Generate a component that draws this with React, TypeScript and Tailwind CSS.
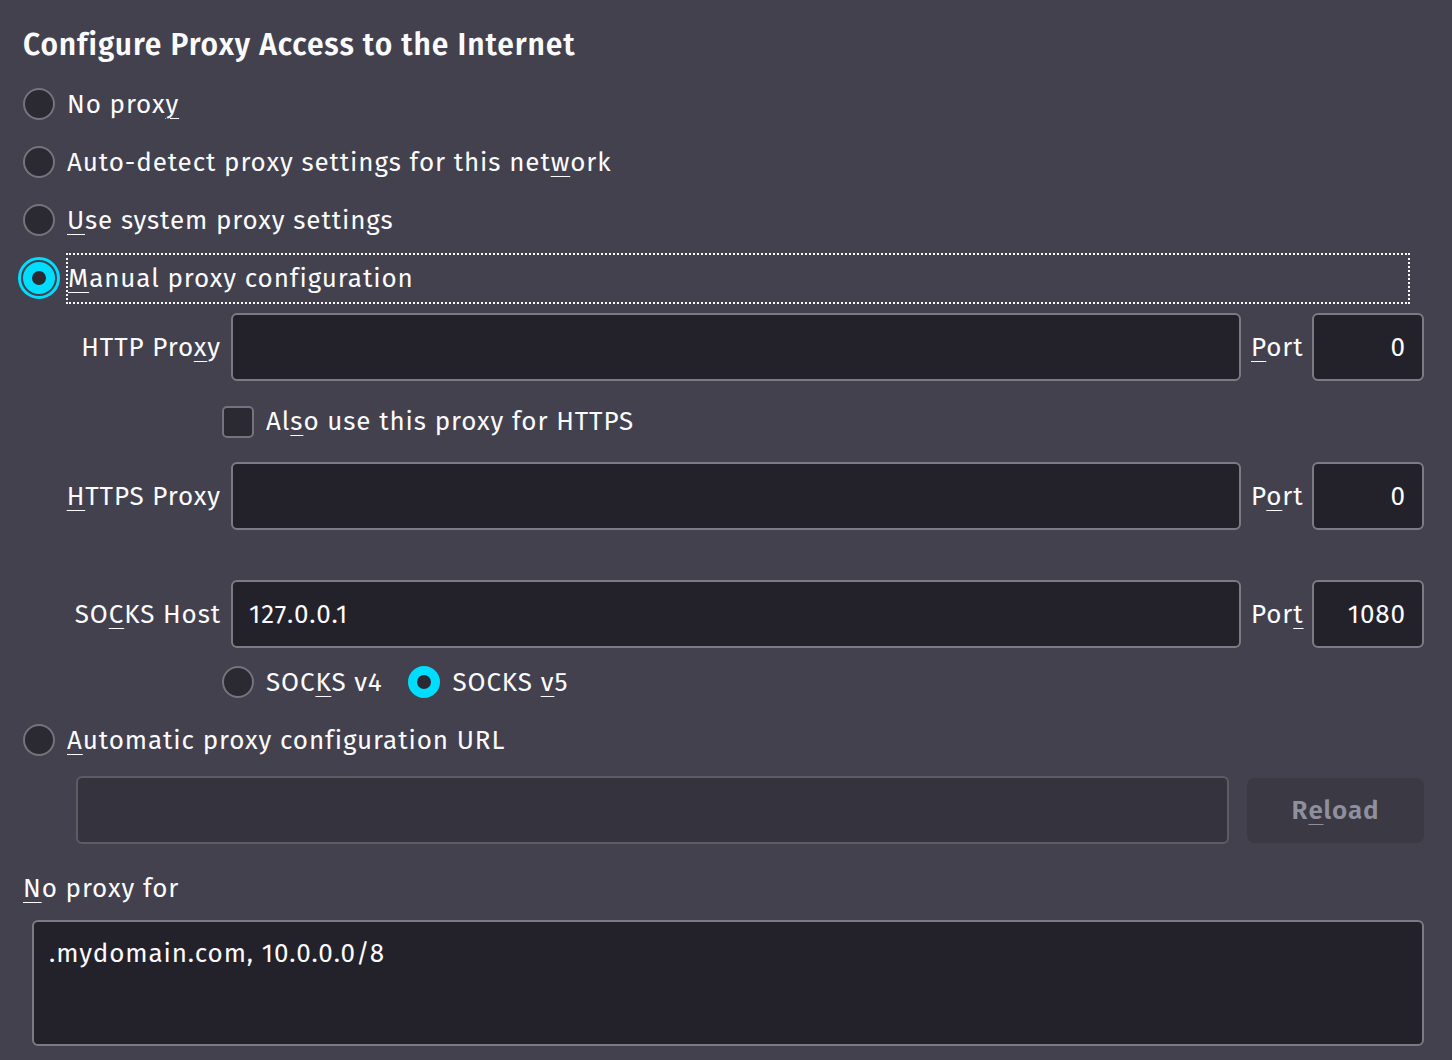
import React from "react";

const Key = ({ text, at }: { text: string; at: number }) => (
    <>
        {text.slice(0, at)}
        <span className="underline decoration-1 underline-offset-[5px]">{text[at]}</span>
        {text.slice(at + 1)}
    </>
);

const Radio = ({ checked, focused }: { checked?: boolean; focused?: boolean }) => {
    if (checked) {
        return (
            <span
                className={
                    "flex h-[32px] w-[32px] shrink-0 items-center justify-center rounded-full " +
                    (focused ? "outline-[3px] outline-solid outline-offset-[2px] outline-[#00ddff]" : "")
                }
            >
                <span className="h-[32px] w-[32px] rounded-full border-[9px] border-[#00ddff] bg-[#2b2a33]" />
            </span>
        );
    }
    return <span className="h-[32px] w-[32px] shrink-0 rounded-full border-2 border-[#75747d] bg-[#2b2a33]" />;
};

const Field = ({ value, align }: { value?: string; align?: "right" }) => (
    <div
        className={
            "flex h-[68px] items-center rounded-[6px] border-2 border-[#7c7b84] bg-[#23222b] px-[16px] " +
            (align === "right" ? "justify-end" : "")
        }
    >
        {value}
    </div>
);

const ProxyRow = ({ label, value, port, portKey }: { label: React.ReactNode; value?: string; port: string; portKey: number }) => (
    <div className="grid h-[68px] grid-cols-[198px_1fr_51px_112px] items-center gap-x-[10px]">
        <span className="whitespace-nowrap text-right">{label}</span>
        <Field value={value} />
        <span className="whitespace-nowrap">
            <Key text="Port" at={portKey} />
        </span>
        <Field value={port} align="right" />
    </div>
);

export default function App() {
    return (
        <div
            className="min-h-[1060px] bg-[#42414d] pl-[23px] pr-[28px] pt-[25px] text-[26px] tracking-[0.9px] text-[#fbfbfe]"
            style={{ fontFamily: '"Fira Sans", "Noto Sans", "Open Sans", sans-serif' }}
        >
            <h1 className="h-[40px] text-[30px] font-semibold leading-[40px] tracking-[0.9px]">Configure Proxy Access to the Internet</h1>

            <div className="mt-[10px] flex flex-col">
                <label className="flex h-[58px] items-center gap-[12px]">
                    <Radio />
                    <span><Key text="No proxy" at={7} /></span>
                </label>
                <label className="flex h-[58px] items-center gap-[12px]">
                    <Radio />
                    <span><Key text="Auto-detect proxy settings for this network" at={39} /></span>
                </label>
                <label className="flex h-[58px] items-center gap-[12px]">
                    <Radio />
                    <span><Key text="Use system proxy settings" at={0} /></span>
                </label>
                <label className="flex h-[58px] items-center gap-[11px]">
                    <Radio checked focused />
                    <span className="mr-[14px] flex h-[51px] flex-1 items-center border-2 border-dotted border-[#fbfbfe]">
                        <Key text="Manual proxy configuration" at={0} />
                    </span>
                </label>
            </div>

            <div className="mt-[6px]">
                <ProxyRow label={<Key text="HTTP Proxy" at={8} />} port="0" portKey={0} />
                <label className="ml-[199px] flex h-[81px] items-center gap-[12px]">
                    <span className="h-[32px] w-[32px] rounded-[5px] border-2 border-[#75747d] bg-[#2b2a33]" />
                    <span><Key text="Also use this proxy for HTTPS" at={2} /></span>
                </label>
                <ProxyRow label={<Key text="HTTPS Proxy" at={0} />} port="0" portKey={1} />
                <div className="mt-[50px]">
                    <ProxyRow label={<Key text="SOCKS Host" at={2} />} value="127.0.0.1" port="1080" portKey={3} />
                </div>
                <div className="ml-[199px] mt-[8px] flex h-[52px] items-center">
                    <label className="flex items-center gap-[12px]">
                        <Radio />
                        <span><Key text="SOCKS v4" at={3} /></span>
                    </label>
                    <label className="ml-[26px] flex items-center gap-[12px]">
                        <Radio checked />
                        <span><Key text="SOCKS v5" at={6} /></span>
                    </label>
                </div>
            </div>

            <label className="mt-[3px] flex h-[58px] items-center gap-[12px]">
                <Radio />
                <span><Key text="Automatic proxy configuration URL" at={0} /></span>
            </label>

            <div className="ml-[53px] mt-[7px] flex h-[68px] items-center gap-[18px]">
                <div className="h-[68px] flex-1 rounded-[6px] border-2 border-[#5d5c65] bg-[#35343e]" />
                <button
                    disabled
                    className="flex h-[65px] w-[177px] items-center justify-center rounded-[8px] bg-[#3a3944] font-semibold text-[#8f8f9d]"
                >
                    <Key text="Reload" at={1} />
                </button>
            </div>

            <div className="mt-[28px] leading-[34px]">
                <Key text="No proxy for" at={0} />
            </div>
            <div className="ml-[9px] mt-[14px] h-[126px] rounded-[6px] border-2 border-[#7c7b84] bg-[#23222b] px-[15px] pt-[15px] leading-[34px]">
                .mydomain.com, 10.0.0.0/8
            </div>
        </div>
    );
}
